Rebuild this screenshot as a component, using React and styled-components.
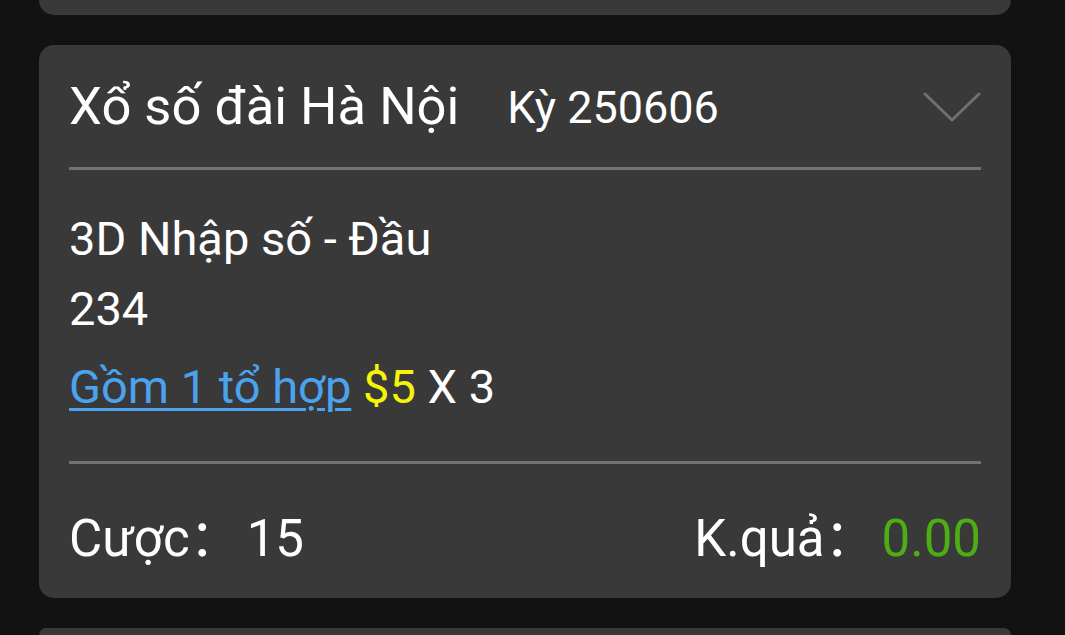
import React from 'react'
import styled, { createGlobalStyle } from 'styled-components'

const GlobalStyle = createGlobalStyle`
    html, body {
        margin: 0;
        padding: 0;
        background: #121212;
        overflow: hidden;
    }
    body {
        font-family: Roboto, "Noto Sans CJK SC", sans-serif;
        color: #fff;
    }
`;

const ticket = {
    station: 'Xổ số đài Hà Nội',
    period: 'Kỳ 250606',
    game: '3D Nhập số - Đầu',
    numbers: '234',
    combos: 'Gồm 1 tổ hợp',
    price: '$5',
    multiplier: 'X 3',
    bet: '15',
    result: '0.00'
}

function Chevron() {
    return (
        <svg width="58" height="32" viewBox="0 0 58 32">
            <polyline
                points="2,3 29,29 56,3"
                fill="none"
                stroke="#707070"
                strokeWidth="3"
                strokeLinecap="round"
                strokeLinejoin="round"
            />
        </svg>
    )
}

function App() {
    return (
        <>
            <GlobalStyle />
            <ListStyled>
                <CardTail />
                <Card>
                    <Header>
                        <Title>{ticket.station}</Title>
                        <Period>{ticket.period}</Period>
                        <ChevronWrap><Chevron /></ChevronWrap>
                    </Header>
                    <Divider />
                    <Body>
                        <Line>{ticket.game}</Line>
                        <Line>{ticket.numbers}</Line>
                        <Line $gap>
                            <ComboLink href="#">{ticket.combos}</ComboLink>{' '}
                            <Price>{ticket.price}</Price> {ticket.multiplier}
                        </Line>
                    </Body>
                    <Divider />
                    <Footer>
                        <Stat>
                            <Label>Cược</Label><Colon>：</Colon>
                            <Value $gap="6px">{ticket.bet}</Value>
                        </Stat>
                        <Stat>
                            <Label>K.quả</Label><Colon>：</Colon>
                            <Value $gap="6px" $color="#4cae14">{ticket.result}</Value>
                        </Stat>
                    </Footer>
                </Card>
                <CardPeek />
            </ListStyled>
        </>
    )
}

const ListStyled = styled.div`
    display: flex;
    flex-direction: column;
    gap: 30px;
    width: 972px;
    padding-left: 39px;
    height: 635px;
`;

const CardTail = styled.div`
    height: 15px;
    flex-shrink: 0;
    background: #393939;
    border-radius: 0 0 15px 15px;
`;

const CardPeek = styled.div`
    flex: 1;
    background: #393939;
    border-radius: 15px 15px 0 0;
`;

const Card = styled.div`
    flex-shrink: 0;
    background: #393939;
    border-radius: 15px;
    padding: 0 30px;
`;

const Header = styled.div`
    height: 122px;
    display: flex;
    align-items: center;
`;

const Title = styled.span`
    font-size: 52.5px;
`;

const Period = styled.span`
    font-size: 45px;
    margin-left: 48px;
    padding-top: 2px;
`;

const ChevronWrap = styled.div`
    margin-left: auto;
    display: flex;
    padding-top: 2px;
`;

const Divider = styled.div`
    height: 3px;
    background: #737373;
`;

const Body = styled.div`
    padding: 34px 0 39px;
    font-size: 47px;
`;

const Line = styled.div`
    line-height: 70px;
    height: 70px;
    white-space: nowrap;
    margin-top: ${p => p.$gap ? '8px' : '0'};
`;

const ComboLink = styled.a`
    color: #4ba3ee;
    text-decoration: underline;
    text-decoration-thickness: 3px;
    text-underline-offset: 5px;
`;

const Price = styled.span`
    color: #f4f40a;
`;

const Footer = styled.div`
    height: 134px;
    display: flex;
    align-items: center;
    justify-content: space-between;
    padding-top: 6px;
    box-sizing: border-box;
    font-size: 51px;
`;

const Stat = styled.div`
    display: flex;
    align-items: baseline;
`;

const Label = styled.span``;

const Colon = styled.span`
    font-family: "Noto Sans CJK SC", sans-serif;
`;

const Value = styled.span`
    color: ${p => p.$color || '#fff'};
    margin-left: ${p => p.$gap};
`;

export default App
